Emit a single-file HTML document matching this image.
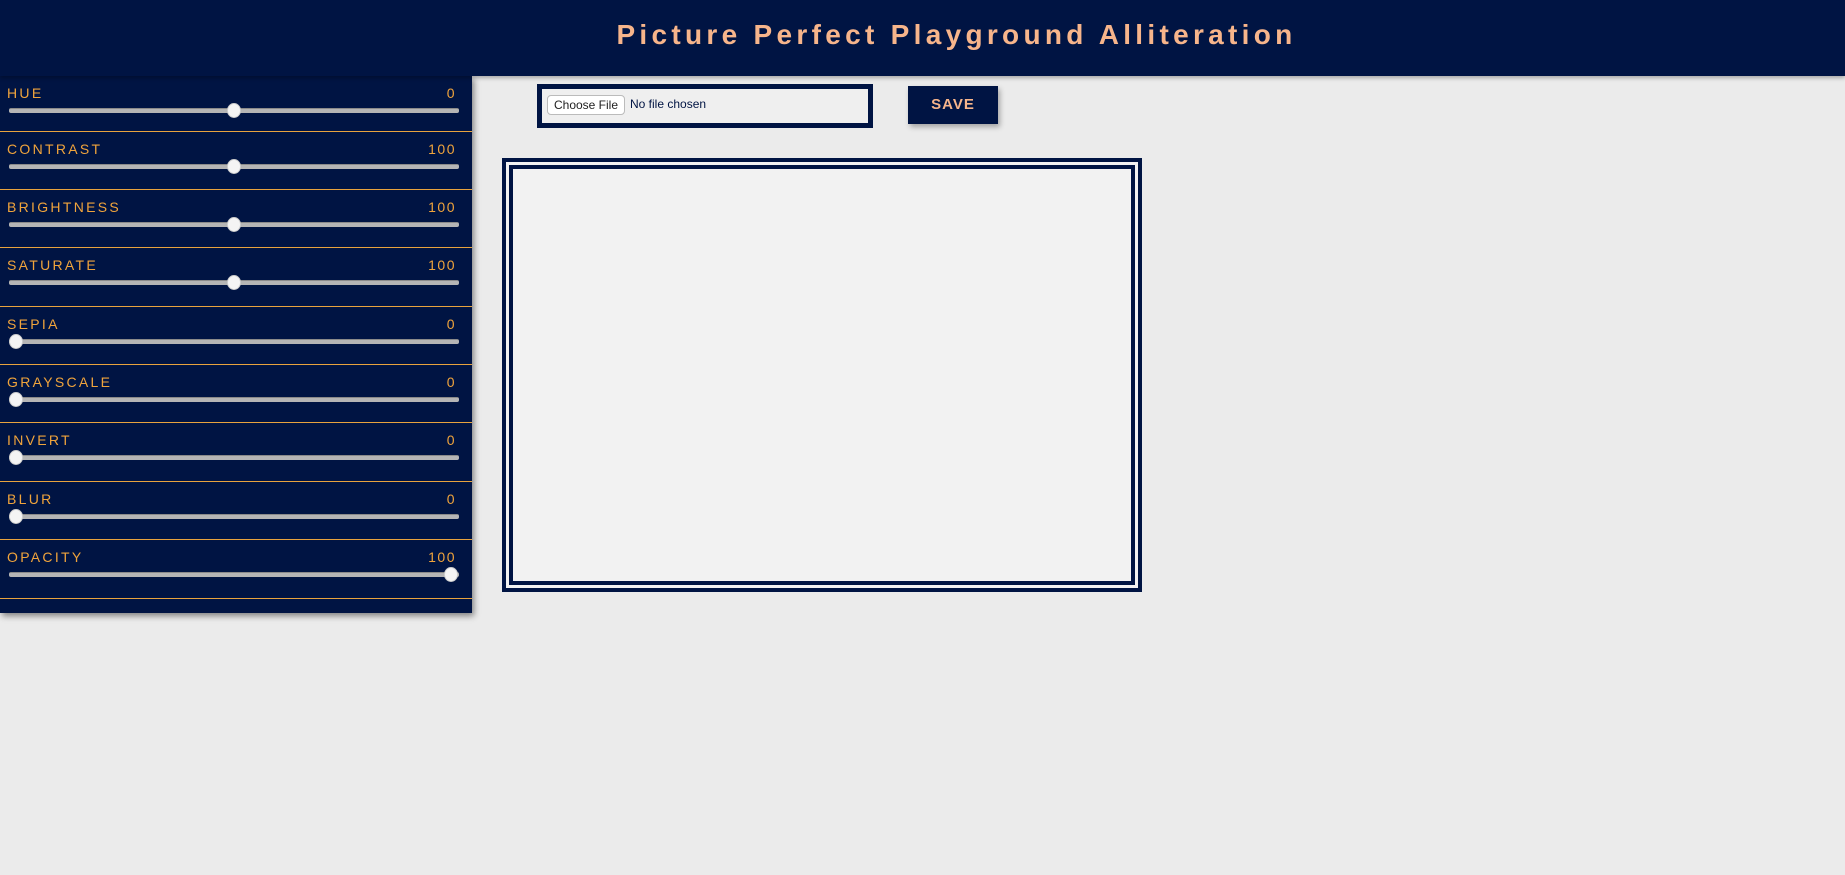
<!DOCTYPE html>
<html><head><meta charset="utf-8"><style>
*{box-sizing:border-box;margin:0;padding:0}
body{width:1845px;height:875px;background:#ebebeb;font-family:"Liberation Sans",sans-serif;position:relative;overflow:hidden}
.hdr{position:absolute;left:0;top:0;width:1845px;height:76px;background:#001443;box-shadow:0 2px 4px rgba(0,0,0,.3);z-index:2}
.hdr h1{position:absolute;left:68px;right:0;top:19px;text-align:center;color:#f7b58b;font-size:28px;font-weight:bold;letter-spacing:4.3px}
.side{position:absolute;left:0;top:76px;width:472px;height:537px;background:#001443;box-shadow:2px 3px 6px rgba(0,0,0,.45)}
.row{position:relative;height:58.4px;border-bottom:1px solid #e8a33e}
.row:first-child{height:55.5px}
.row .l{position:absolute;left:7px;top:9px;color:#f0a43c;font-size:14px;letter-spacing:2.3px}
.row .v{position:absolute;right:16px;top:9px;color:#f0a43c;font-size:14px;letter-spacing:1.5px}
.row:first-child .l,.row:first-child .v{top:9px}
.tr{position:absolute;left:9px;width:450px;top:32px;height:5px;background:#b5b5b5;border-radius:2px;border-top:1px solid #8a8a8a}
.row:first-child .tr{top:32px}.row:first-child .th{top:27px}
.th{position:absolute;top:27px;width:14px;height:15px;border-radius:50%;background:#f4f4f4;border:1px solid #ccc}
.file{position:absolute;left:537px;top:84px;width:336px;height:44px;border:5px solid #001443;background:#efefef}
.btn{position:absolute;left:5px;top:6px;width:78px;height:20px;border:1px solid #bbb;border-radius:4px;background:#fff;font-size:12px;color:#222;text-align:center;line-height:18px}
.nf{position:absolute;left:88px;top:8px;font-size:12px;color:#001443}
.save{position:absolute;left:908px;top:86px;width:90px;height:38px;background:#001443;color:#f7b58b;font-weight:bold;font-size:15px;letter-spacing:1px;text-align:center;line-height:38px;box-shadow:2px 3px 5px rgba(0,0,0,.3)}
.cv{position:absolute;left:502px;top:158px;width:640px;height:434px;border:4px solid #001443;background:#f2f2f2}
.cv div{position:absolute;left:3px;top:3px;right:3px;bottom:3px;border:4px solid #001443}
</style></head><body>
<div class="hdr"><h1>Picture Perfect Playground Alliteration</h1></div>
<div class="side">
<div class="row"><span class="l">HUE</span><span class="v">0</span><div class="tr"></div><div class="th" style="left:227px"></div></div>
<div class="row"><span class="l">CONTRAST</span><span class="v">100</span><div class="tr"></div><div class="th" style="left:227px"></div></div>
<div class="row"><span class="l">BRIGHTNESS</span><span class="v">100</span><div class="tr"></div><div class="th" style="left:227px"></div></div>
<div class="row"><span class="l">SATURATE</span><span class="v">100</span><div class="tr"></div><div class="th" style="left:227px"></div></div>
<div class="row"><span class="l">SEPIA</span><span class="v">0</span><div class="tr"></div><div class="th" style="left:9px"></div></div>
<div class="row"><span class="l">GRAYSCALE</span><span class="v">0</span><div class="tr"></div><div class="th" style="left:9px"></div></div>
<div class="row"><span class="l">INVERT</span><span class="v">0</span><div class="tr"></div><div class="th" style="left:9px"></div></div>
<div class="row"><span class="l">BLUR</span><span class="v">0</span><div class="tr"></div><div class="th" style="left:9px"></div></div>
<div class="row"><span class="l">OPACITY</span><span class="v">100</span><div class="tr"></div><div class="th" style="left:444px"></div></div>
</div>
<div class="file"><div class="btn">Choose File</div><span class="nf">No file chosen</span></div>
<div class="save">SAVE</div>
<div class="cv"><div></div></div>
</body></html>
